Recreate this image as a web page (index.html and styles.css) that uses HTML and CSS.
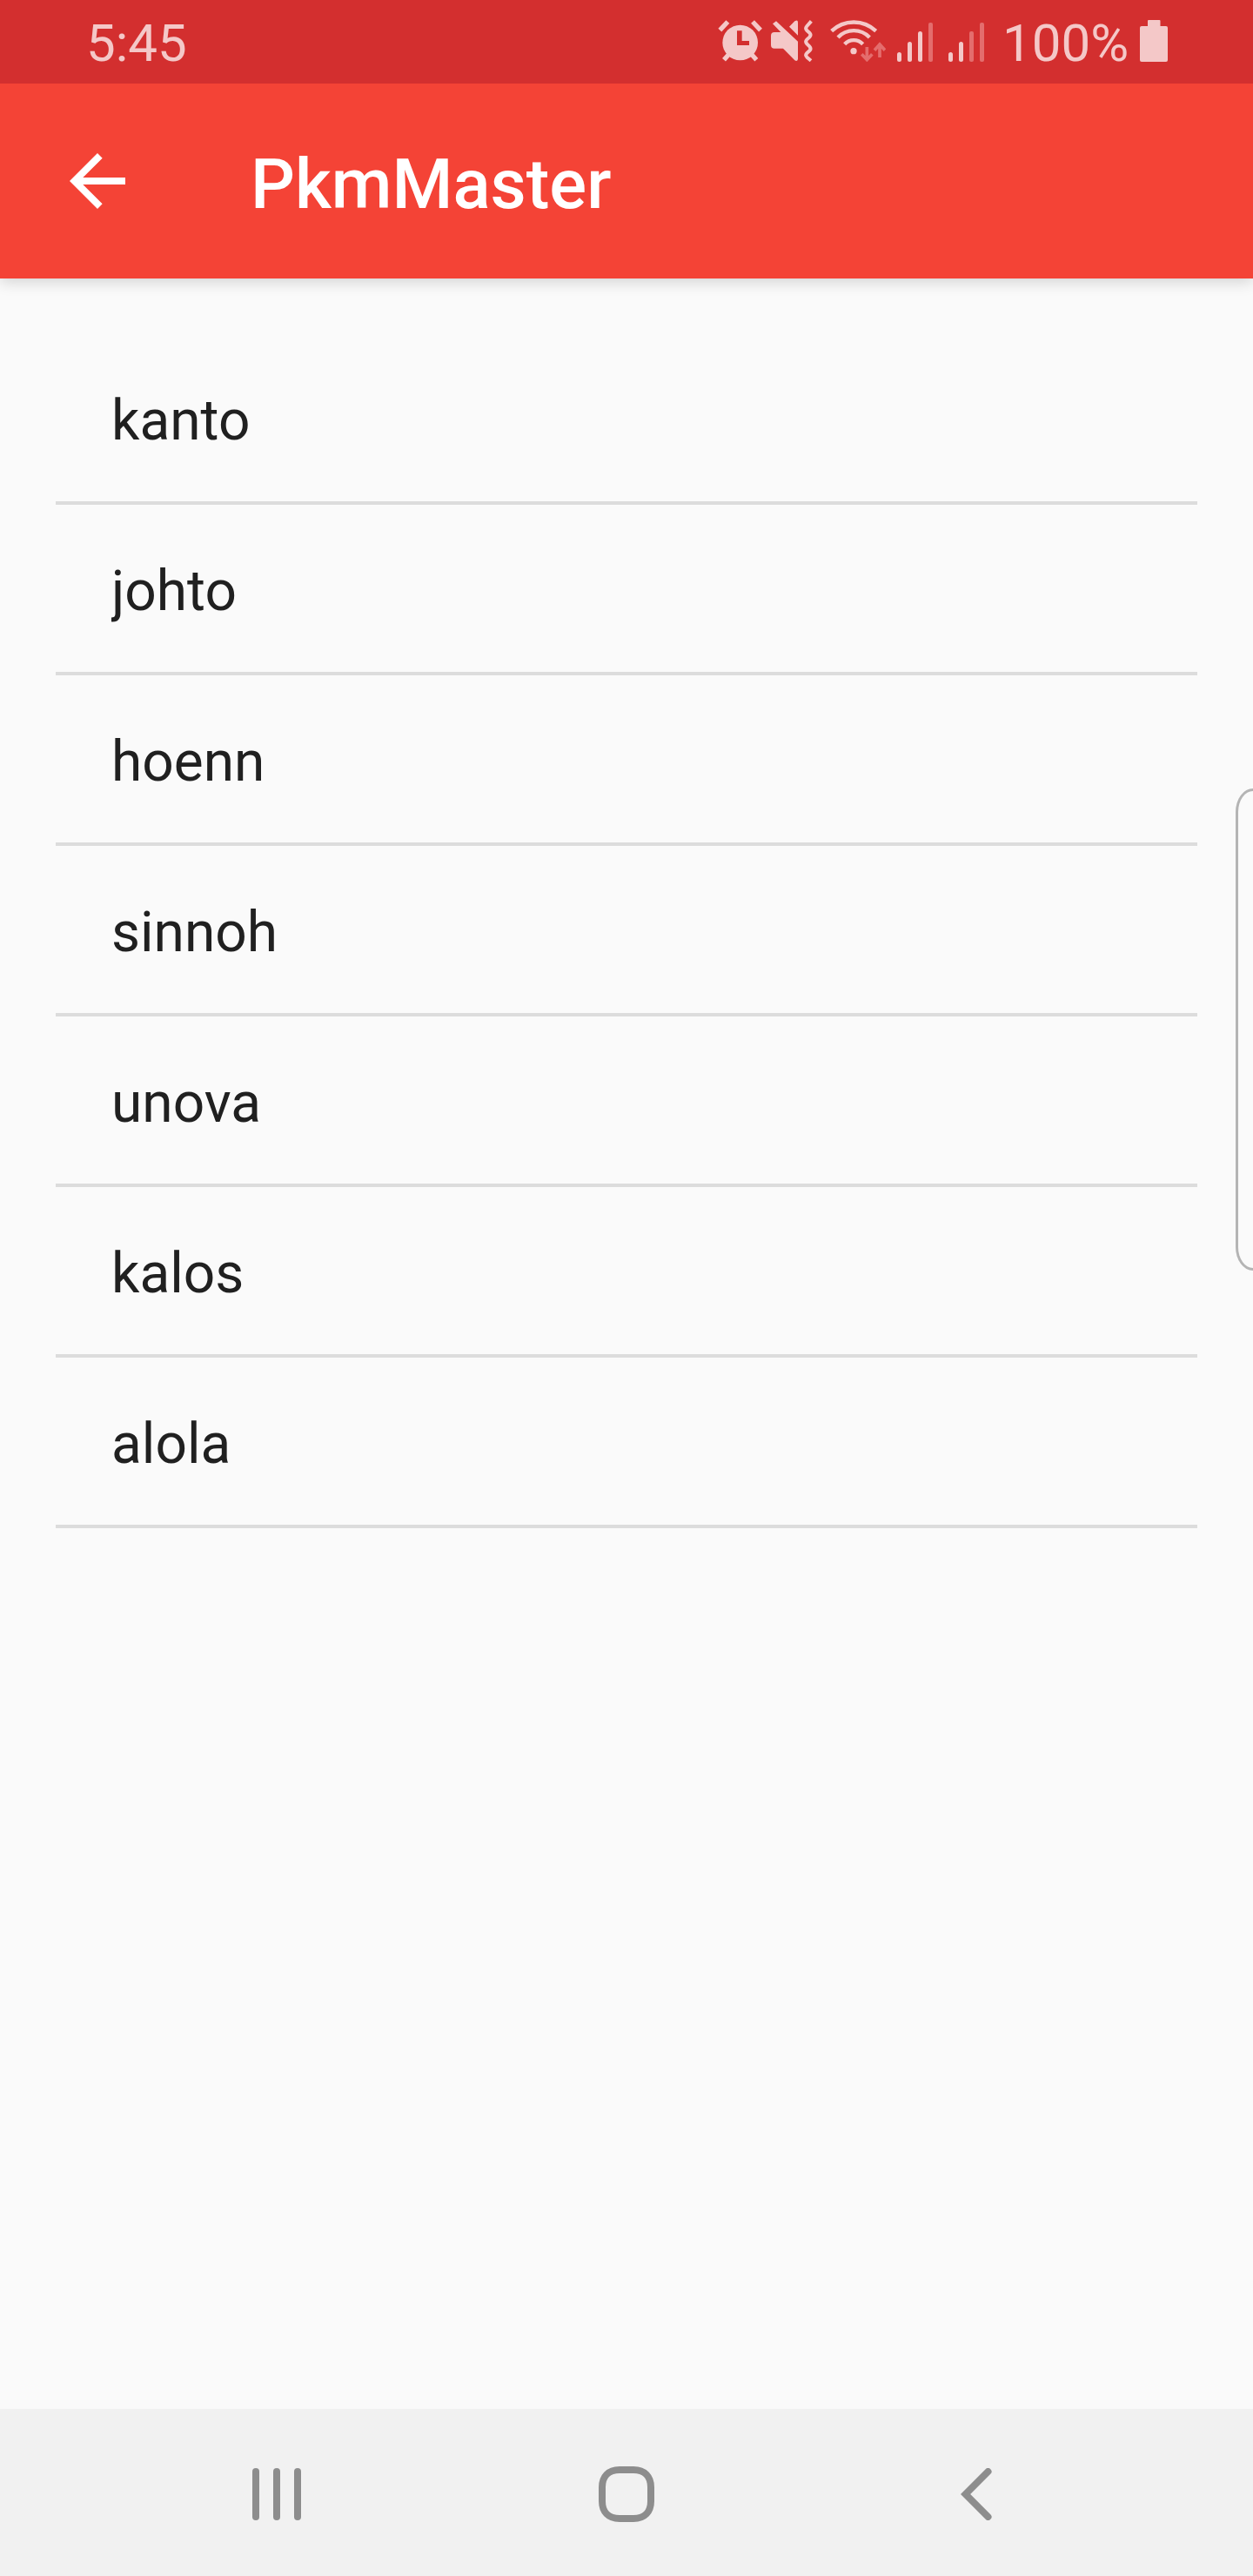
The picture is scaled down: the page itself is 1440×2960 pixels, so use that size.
FILE: index.html
```html
<!DOCTYPE html>
<html lang="en">
<head>
<meta charset="utf-8">
<title>PkmMaster</title>
<link rel="stylesheet" href="styles.css">
</head>
<body>
<div class="screen">
  <header class="status">
    <span class="time">5:45</span>
    <div class="indicators">
      <svg class="alarm" width="51" height="48" viewBox="45 69 153 144">
        <circle cx="122" cy="147" r="61" fill="currentColor"/>
        <path d="M52 104 79 75M165 75 192 104M66 206 84 186M178 206 160 186" stroke="currentColor" stroke-width="16"/>
        <path class="hands" d="M111 106h17v35h25v15h-42z"/>
      </svg>
      <svg class="mute" width="49" height="48" viewBox="228 69 147 144">
        <path d="M291 92 310 73Q321 66 321 77V122ZM246 73 321 143V204Q319 213 310 208L270 167H240Q228 167 228 155V123Q228 111 240 111H262L234 82Z" fill="currentColor"/>
        <path d="M367 73 352 90Q345 98 352 105L361 113Q368 120 361 128L352 136Q345 143 352 151L361 160Q368 168 361 175L352 183Q345 190 352 197L366 209" fill="none" stroke="currentColor" stroke-width="12"/>
      </svg>
      <svg class="wifi" width="64" height="48" viewBox="432 69 192 144">
        <g fill="none" stroke="currentColor" stroke-width="13">
          <path d="M437 107A111 111 0 0 1 590 107M459 129A75 75 0 0 1 568 129M482 152A43 43 0 0 1 545 152"/>
        </g>
        <circle cx="513" cy="176" r="11" fill="currentColor"/>
        <path class="dim-line" d="M559 162V204M541 187 559 206 577 187M603 198V155M585 173 603 153 621 173"/>
      </svg>
      <svg class="signal" width="41" height="48" viewBox="0 23 41 48" fill="currentColor">
        <rect x="0" y="60" width="5" height="11" rx="2.5"/><rect x="12" y="48" width="5" height="23" rx="2.5"/><rect x="24" y="36" width="5" height="35" rx="2.5"/><rect class="dim" x="36" y="26" width="5" height="45" rx="2"/>
      </svg>
      <svg class="signal second" width="41" height="48" viewBox="0 23 41 48" fill="currentColor">
        <rect x="0" y="60" width="5" height="11" rx="2.5"/><rect x="12" y="48" width="5" height="23" rx="2.5"/><rect class="dim" x="24" y="36" width="5" height="35" rx="2"/><rect class="dim" x="36" y="26" width="5" height="45" rx="2"/>
      </svg>
      <span class="percent">100%</span>
      <svg class="battery" width="32" height="48" viewBox="0 0 32 48" fill="currentColor">
        <rect x="9" width="14.5" height="12" rx="1"/><rect y="7" width="32" height="41" rx="2"/>
      </svg>
    </div>
  </header>
  <div class="appbar">
    <svg class="back" width="96" height="96" viewBox="0 0 24 24" fill="currentColor"><path d="M20 11H7.83l5.59-5.59L12 4l-8 8 8 8 1.41-1.41L7.83 13H20v-2z"/></svg>
    <h1 class="title">PkmMaster</h1>
  </div>
  <main class="content">
    <ul class="regions">
      <li class="region"><span class="name">kanto</span></li>
      <li class="region"><span class="name">johto</span></li>
      <li class="region"><span class="name">hoenn</span></li>
      <li class="region"><span class="name">sinnoh</span></li>
      <li class="region"><span class="name">unova</span></li>
      <li class="region"><span class="name">kalos</span></li>
      <li class="region"><span class="name">alola</span></li>
    </ul>
  </main>
  <nav class="navbar">
    <svg width="56" height="60" viewBox="0 0 56 60" fill="currentColor"><rect width="8" height="60" rx="4"/><rect x="24" width="8" height="60" rx="4"/><rect x="48" width="8" height="60" rx="4"/></svg>
    <svg class="home" width="64" height="64" viewBox="0 0 64 64" fill="none" stroke="currentColor" stroke-width="8"><path d="M24 4H40C53 4 60 12 60 24V40C60 52 53 60 40 60H24C11 60 4 52 4 40V24C4 12 11 4 24 4Z"/></svg>
    <svg width="36" height="60" viewBox="0 0 36 60" fill="none" stroke="currentColor" stroke-width="8" stroke-linecap="round"><path d="M31.5 4 5.6 30 31.5 56"/></svg>
  </nav>
  <div class="edge-handle"></div>
</div>
</body>
</html>
```

FILE: styles.css
```css
* { box-sizing: border-box; }
body { margin: 0; }
.screen {
  position: relative;
  display: flex;
  flex-direction: column;
  width: 1440px;
  height: 2960px;
  overflow: hidden;
  background: #fafafa;
  font-family: Roboto, sans-serif;
}
.status {
  position: relative;
  z-index: 1;
  display: flex;
  justify-content: space-between;
  height: 96px;
  padding: 0 98px 0 99px;
  background: #d32f2f;
  color: #f4c8c8;
  font-size: 60px;
  line-height: 99px;
}
.indicators { display: flex; align-items: flex-start; }
.indicators svg { margin-top: 23px; }
.hands { fill: #d32f2f; }
.mute { margin-left: 10px; }
.wifi { margin-left: 19px; }
.signal { margin-left: 13px; }
.second { margin-left: 18px; }
.dim { fill: #e46d6d; }
.dim-line { fill: none; stroke: #e46d6d; stroke-width: 11px; }
.percent { width: 145px; margin: 0 13px 0 21px; white-space: nowrap; }
.appbar {
  display: flex;
  align-items: center;
  height: 224px;
  padding: 0 64px;
  background: #f44336;
  color: #fff;
  box-shadow: 0 4px 16px rgba(0, 0, 0, .16);
}
.title {
  margin: 8px 0 0 128px;
  font-size: 80px;
  font-weight: 500;
  line-height: 96px;
}
.content { flex: 1; padding: 64px; }
.regions { margin: 0; padding: 0; list-style: none; }
.region {
  height: 196px;
  padding: 51px 64px 0;
  border-bottom: 4px solid #dcdcdc;
  color: #202020;
  font-size: 64px;
  line-height: 97px;
}
.name { display: block; overflow: hidden; }
.navbar {
  display: flex;
  align-items: center;
  height: 192px;
  padding: 4px 0 0 290px;
  background: #f1f1f1;
  color: #8d8d8d;
}
.home { margin: 0 352px 0 342px; }
.edge-handle {
  position: absolute;
  top: 906px;
  right: 0;
  width: 20px;
  height: 554px;
  border: 3px solid #b4b4b4;
  border-right: 0;
  border-radius: 20px 0 0 20px / 27px 0 0 27px;
}
```
